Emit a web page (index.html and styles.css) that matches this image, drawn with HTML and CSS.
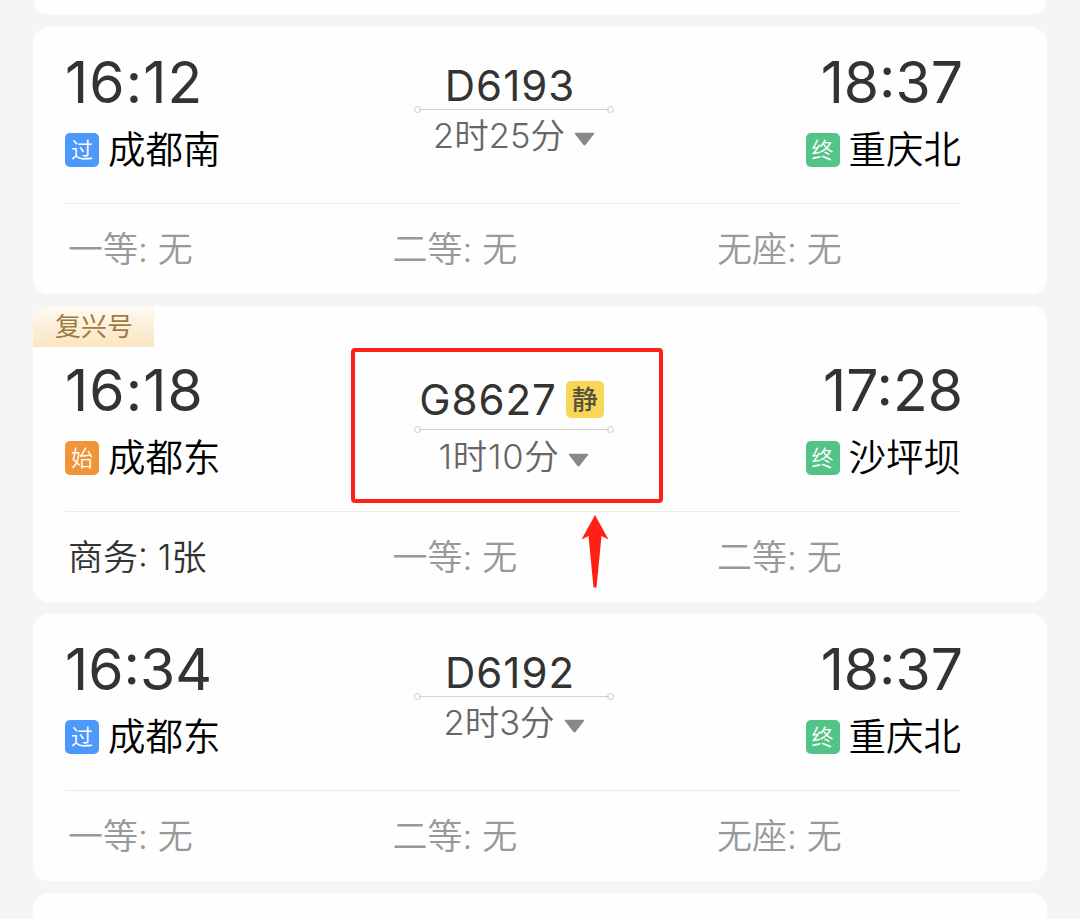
FILE: index.html
```html
<!DOCTYPE html>
<html lang="zh-CN">
<head>
    <meta charset="UTF-8">
    <meta name="viewport" content="width=device-width, initial-scale=1.0">
    <title>车次列表</title>
    <link rel="stylesheet" href="styles.css">
</head>
<body>
    <div class="train-list">
        <div class="card card-first"></div>

        <div class="card">
            <div class="trip">
                <div class="stop">
                    <div class="time time-wide">16:12</div>
                    <div class="station"><span class="tag pass">过</span>成都南</div>
                </div>
                <div class="train">
                    <div class="code">D6193</div>
                    <div class="line"></div>
                    <div class="duration">2时25分<svg class="arrow" viewBox="0 0 20 13"><path d="M1.5 0.5h17q1.5 0 .6 1.2l-8 10.3q-1.100 1.200-2.200 0l-8-10.300q-.9-1.200.6-1.200z"/></svg></div>
                </div>
                <div class="stop stop-end">
                    <div class="time">18:37</div>
                    <div class="station"><span class="tag end">终</span>重庆北</div>
                </div>
            </div>
            <div class="seats">
                <span>一等: 无</span>
                <span>二等: 无</span>
                <span>无座: 无</span>
            </div>
        </div>

        <div class="card card-fuxing">
            <div class="ribbon">复兴号</div>
            <div class="trip">
                <div class="stop">
                    <div class="time time-wide">16:18</div>
                    <div class="station"><span class="tag start">始</span>成都东</div>
                </div>
                <div class="train">
                    <div class="code">G8627<span class="quiet">静</span></div>
                    <div class="line"></div>
                    <div class="duration">1时10分<svg class="arrow" viewBox="0 0 20 13"><path d="M1.5 0.5h17q1.5 0 .6 1.2l-8 10.3q-1.100 1.200-2.200 0l-8-10.300q-.9-1.200.6-1.200z"/></svg></div>
                </div>
                <div class="stop stop-end">
                    <div class="time">17:28</div>
                    <div class="station"><span class="tag end">终</span>沙坪坝</div>
                </div>
            </div>
            <div class="seats">
                <span class="available">商务: 1张</span>
                <span>一等: 无</span>
                <span>二等: 无</span>
            </div>
            <div class="mark-box"></div>
            <svg class="mark-arrow" viewBox="0 0 28 74"><path d="M14 0L27.500 24.500L20.500 21L15.500 72.500H12.500L7.500 21L.5 24.500z"/></svg>
        </div>

        <div class="card">
            <div class="trip">
                <div class="stop">
                    <div class="time">16:34</div>
                    <div class="station"><span class="tag pass">过</span>成都东</div>
                </div>
                <div class="train">
                    <div class="code">D6192</div>
                    <div class="line"></div>
                    <div class="duration">2时3分<svg class="arrow" viewBox="0 0 20 13"><path d="M1.5 0.5h17q1.5 0 .6 1.2l-8 10.3q-1.100 1.200-2.200 0l-8-10.300q-.9-1.200.6-1.200z"/></svg></div>
                </div>
                <div class="stop stop-end">
                    <div class="time">18:37</div>
                    <div class="station"><span class="tag end">终</span>重庆北</div>
                </div>
            </div>
            <div class="seats">
                <span>一等: 无</span>
                <span>二等: 无</span>
                <span>无座: 无</span>
            </div>
        </div>

        <div class="card card-last"></div>
    </div>
</body>
</html>
```

FILE: styles.css
```css
* {
    box-sizing: border-box;
}
body {
    margin: 0;
    height: 919px;
    overflow: hidden;
    background-color: #f5f5f5;
    color: #333;
    font-family: Inter, "Noto Sans CJK SC", sans-serif;
}
.train-list {
    display: flex;
    flex-direction: column;
    gap: 11.6px;
    padding: 0 33px;
}
.card {
    position: relative;
    flex: none;
    height: 267.5px;
    padding: 28px 86px 0 32px;
    background: #fefefe;
    border-radius: 16px;
}
.card-first {
    height: 15.2px;
    padding: 0;
    border-radius: 0 0 16px 16px;
}
.card-last {
    height: 60px;
    padding: 0;
}
.card-fuxing {
    height: 296.5px;
    padding-top: 57px;
}
.trip {
    display: grid;
    grid-template-columns: 349px 200px 1fr;
    height: 149px;
    border-bottom: 1px solid #ebebeb;
}
.time {
    height: 56px;
    line-height: 56px;
    font-size: 57px;
}
.time-wide {
    letter-spacing: 1.1px;
}
.stop-end {
    display: flex;
    flex-direction: column;
    align-items: flex-end;
}
.stop-end .time {
    margin-right: -2px;
}
.station {
    display: flex;
    align-items: flex-start;
    height: 34px;
    margin-top: 22px;
    color: #000;
    font-family: "Noto Sans CJK SC", sans-serif;
    font-size: 37.500px;
    font-weight: 350;
    line-height: 28px;
}
.tag {
    width: 34px;
    height: 34px;
    margin-right: 9px;
    border-radius: 5px;
    color: #fff;
    font-size: 22px;
    line-height: 31px;
    text-align: center;
}
.pass {
    background: #4d99fb;
}
.start {
    background: #f19338;
}
.end {
    background: #53c487;
}
.train {
    display: flex;
    flex-direction: column;
    align-items: center;
    padding-top: 9px;
}
.code {
    display: flex;
    align-items: center;
    height: 44px;
    padding-right: 8px;
    font-size: 42px;
    letter-spacing: 1px;
    line-height: 44px;
}
.quiet {
    width: 38px;
    height: 37px;
    margin-left: 9px;
    border-radius: 5px;
    background: #f8d656;
    color: #55513f;
    font-size: 26px;
    font-weight: 500;
    letter-spacing: 0;
    line-height: 37px;
    text-align: center;
}
.line {
    display: flex;
    align-items: center;
    justify-content: space-between;
    width: 200px;
    height: 5px;
    margin-top: -1px;
    background: linear-gradient(#d2d2d2, #d2d2d2) center / 190px 1px no-repeat;
}
.line::before,
.line::after {
    content: "";
    width: 5px;
    height: 5px;
    border: 1px solid #ccc;
    border-radius: 50%;
}
.duration {
    display: flex;
    align-items: center;
    height: 40px;
    margin-top: 4px;
    color: #666;
    font-size: 34.500px;
    font-weight: 350;
    line-height: 40px;
}
.arrow {
    width: 21px;
    height: 14px;
    margin: 7px 0 0 9px;
    fill: #888;
}
.card-fuxing .train {
    padding-top: 15px;
}
.card-fuxing .code {
    padding-right: 5px;
}
.card-fuxing .line {
    margin-top: 5px;
}
.card-fuxing .duration {
    margin-top: 5px;
    letter-spacing: 0.7px;
}
.seats {
    display: grid;
    grid-template-columns: repeat(3, 324.500px);
    padding: 21px 0 0 3px;
    color: #999;
    font-size: 35px;
    font-weight: 350;
    line-height: 48px;
}
.available {
    color: #333;
}
.ribbon {
    position: absolute;
    top: 0;
    left: 0;
    width: 121px;
    height: 41px;
    padding-left: 22px;
    border-radius: 16px 0 0 0;
    background: linear-gradient(#fefaf3, #fae5c0);
    color: #9f7b3f;
    font-size: 26px;
    line-height: 42px;
}
/* red highlight over the train number */
.mark-box {
    position: absolute;
    top: 42px;
    left: 318px;
    width: 312px;
    height: 155px;
    border: 4px solid #ff2113;
    border-radius: 4px;
}
.mark-arrow {
    position: absolute;
    top: 209px;
    left: 548px;
    width: 28px;
    height: 74px;
    fill: #ff2113;
}
```
